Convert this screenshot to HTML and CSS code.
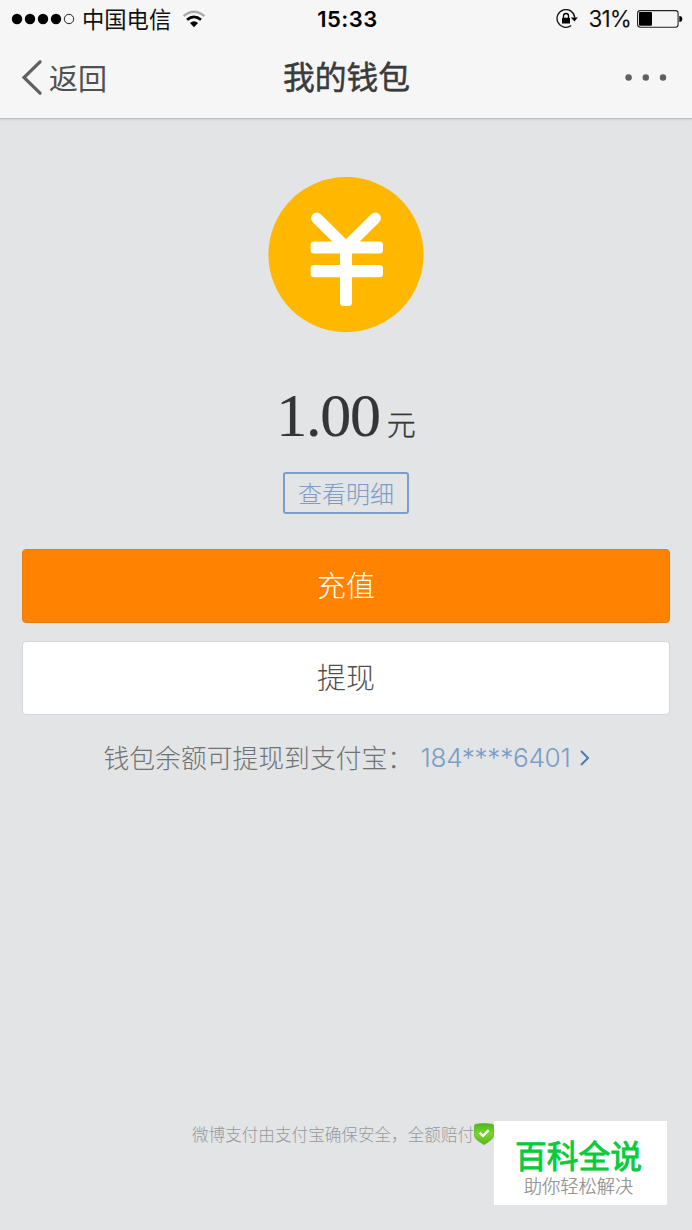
FILE: index.html
```html
<!DOCTYPE html>
<html lang="zh-CN">
<head>
<meta charset="utf-8">
<title>我的钱包</title>
<link rel="stylesheet" href="styles.css">
</head>
<body>
<div class="screen">
  <header class="top">
    <div class="status">
      <div class="status-left">
        <svg class="signal" width="64" height="12" viewBox="0 0 64 12">
          <circle cx="6" cy="6" r="5.2"/><circle cx="19" cy="6" r="5.2"/><circle cx="32" cy="6" r="5.2"/><circle cx="45" cy="6" r="5.2"/>
          <circle cx="58" cy="6" r="4.7" fill="none" stroke="#222" stroke-width="1"/>
        </svg>
        <span class="carrier">中国电信</span>
        <svg class="wifi" width="24" height="18" viewBox="0 0 24 18" fill="none">
          <path d="M1.6 6.2Q12 -2.8 22.4 6.2" stroke="#aaa" stroke-width="2.4"/>
          <path d="M5 9.8Q12 3.8 19 9.8" stroke="#000" stroke-width="2.7"/>
          <path d="M8 13.1Q12 9.4 16 13.1L12 17.2Z" fill="#000"/>
        </svg>
      </div>
      <span class="time">15:33</span>
      <div class="status-right">
        <svg class="lock" width="22" height="20" viewBox="0 0 22 20" fill="none">
          <path d="M15.2 16.6A8.9 8.9 0 1 1 18.8 8.6" stroke="#111" stroke-width="1.3"/>
          <path d="M14.8 8.5H21.8L18.4 12.4Z" fill="#000"/>
          <rect x="6" y="8.8" width="8" height="5.8" rx=".6" fill="#000"/>
          <path d="M7.5 9V7a2.5 2.5 0 0 1 5 0v2" stroke="#000" stroke-width="1.3"/>
        </svg>
        <span class="percent">31%</span>
        <svg class="battery" width="46" height="18" viewBox="0 0 46 18">
          <rect x=".6" y=".6" width="40.5" height="16.6" rx="2.6" fill="none" stroke="#222" stroke-width="1.1"/>
          <rect x="2" y="2" width="13" height="13.8" rx="1"/>
          <path d="M42.3 6q3 .2 3 3t-3 3z"/>
        </svg>
      </div>
    </div>
    <nav class="nav">
      <div class="back">
        <svg width="22" height="36" viewBox="0 0 22 36" fill="none" stroke="#606060" stroke-width="3.2" stroke-linecap="round" stroke-linejoin="miter"><path d="M19 1.8L3 17.5L19 33.2"/></svg>
        <span>返回</span>
      </div>
      <h1 class="title">我的钱包</h1>
      <svg class="more" width="42" height="8" viewBox="0 0 42 8" fill="#606060"><circle cx="3.6" cy="3.5" r="3.2"/><circle cx="20.8" cy="3.5" r="3.2"/><circle cx="38" cy="3.5" r="3.2"/></svg>
    </nav>
  </header>
  <main class="wallet">
    <svg class="coin" width="156" height="156" viewBox="0 0 156 156" fill="none">
      <circle cx="78" cy="77.6" r="77.6" fill="#ffb700"/>
      <g stroke="#fff" stroke-width="11.4" stroke-linecap="round"><path d="M48.8 41.2L78 70L107.2 41.2"/></g>
      <g fill="#fff"><rect x="42.6" y="64.6" width="72.4" height="12" rx="3.5"/><rect x="42.6" y="88" width="72.4" height="12.2" rx="3.5"/><rect x="72" y="65" width="12" height="64" rx="3.5"/></g>
    </svg>
    <div class="balance"><span class="amount">1.00</span><span class="unit">元</span></div>
    <a class="detail">查看明细</a>
    <div class="actions">
      <button class="btn primary">充值</button>
      <button class="btn plain">提现</button>
    </div>
    <div class="account">
      <span class="account-label">钱包余额可提现到支付宝：</span>
      <span class="account-number">184****6401</span>
      <svg class="chevron" width="12" height="18" viewBox="0 0 12 18" fill="none" stroke="#5278b0" stroke-width="2"><path d="M2 3L9 10L2 17"/></svg>
    </div>
  </main>
  <footer class="footer">
    <span>微博支付由支付宝确保安全，全额赔付</span>
    <svg class="shield" width="20" height="22" viewBox="0 0 20 22">
      <defs><linearGradient id="green" x2="0" y2="1"><stop stop-color="#50b51d"/><stop offset=".5" stop-color="#7bd42d"/><stop offset="1" stop-color="#56b91d"/></linearGradient></defs>
      <path d="M2 1.2Q10 -.2 18 1.2Q19.5 1.5 19.5 3V12.5Q19.3 15 16.8 17L11.2 21Q10 21.7 8.8 21L3.2 17Q.7 15 .5 12.5V3Q.5 1.5 2 1.2Z" fill="url(#green)" stroke="#4fb41f" stroke-width=".7"/>
      <path d="M5.6 9.6L9 12.8L14.6 7.2" fill="none" stroke="#fff" stroke-width="2.4"/>
    </svg>
  </footer>
  <aside class="stamp">
    <strong>百科全说</strong>
    <span>助你轻松解决</span>
  </aside>
</div>
</body>
</html>
```
FILE: styles.css
```css
* { box-sizing: border-box; }
body { margin: 0; font-family: Inter, "Noto Sans CJK SC", sans-serif; }
svg { display: block; flex: none; }
.screen {
  position: relative;
  display: flex;
  flex-direction: column;
  width: 692px;
  height: 1230px;
  overflow: hidden;
  background: #e2e4e6;
}
.top {
  height: 119px;
  background: #f6f6f6;
  border-bottom: 1px solid #bbbdbe;
  box-shadow: 0 1px 2px #cfd1d2;
}
.status, .nav {
  display: grid;
  grid-template-columns: 1fr auto 1fr;
  align-items: center;
}
.status { height: 38px; padding: 0 9px 0 11px; color: #111; }
.status-left, .status-right { display: flex; align-items: center; }
.status-right { justify-content: flex-end; }
.carrier { margin: 0 0 0 7px; padding-bottom: 2px; font-family: "Noto Sans CJK SC", sans-serif; font-size: 22.3px; line-height: 34px; }
.wifi { margin-left: 11px; }
.time { padding-left: 1px; font-size: 22px; line-height: 38px; font-weight: 600; letter-spacing: .5px; color: #000; }
.percent { margin: 0 6px 0 11px; font-size: 22.5px; line-height: 38px; letter-spacing: -.9px; }
.nav { height: 80px; padding: 0 25px 0 21px; }
.back { display: flex; align-items: center; gap: 6px; color: #505050; font: 29px/44px "Noto Sans CJK SC", sans-serif; }
.back span { padding-bottom: 2px; }
.title { margin: 0; padding: 0 0 6px 5px; color: #3b3b3b; font: 400 31.8px/46px "Noto Sans CJK SC", sans-serif; -webkit-text-stroke: .5px #3b3b3b; }
.more { justify-self: end; }
.wallet { display: flex; flex-direction: column; align-items: center; padding: 58px 22px 0; }
.balance { display: flex; align-items: baseline; gap: 7px; height: 86px; margin-top: 39px; color: #333538; }
.amount { font: 62px/86px "Liberation Serif", serif; letter-spacing: -1.2px; -webkit-text-stroke: .2px #333538; }
.unit { font: 300 29px/40px "Noto Sans CJK SC", sans-serif; -webkit-text-stroke: .3px #333538; }
.detail {
  width: 126px;
  height: 42px;
  margin-top: 14px;
  border: 2px solid #7b9dc6;
  border-radius: 3px;
  color: #7b9dc6;
  font: 300 24px/38px "Noto Sans CJK SC", sans-serif;
  text-align: center;
}
.actions { display: flex; flex-direction: column; gap: 18px; align-self: stretch; margin-top: 35px; }
.btn { height: 74px; padding: 0 0 4px; border-radius: 4px; font: 300 29px/68px "Noto Sans CJK SC", sans-serif; text-align: center; }
.primary { border: 1px solid #e87e12; background: #ff8200; color: #fff; }
.plain { border: 1px solid #d5d7d8; background: #fff; color: #505050; }
.account { display: flex; align-items: center; height: 40px; margin-top: 22px; padding-left: 2px; font-weight: 300; }
.account-label { width: 317px; color: #707274; font: 300 25.8px/40px "Noto Sans CJK SC", sans-serif; white-space: nowrap; }
.account-number { width: 151px; padding-top: 1px; color: #7b9dc6; font-size: 26.2px; font-weight: 300; letter-spacing: -.3px; white-space: nowrap; }
.chevron { margin-left: 7px; }
.footer { display: flex; align-items: center; height: 28px; margin: auto 0 82px 192px; color: #98999b; font: 300 16.6px/28px "Noto Sans CJK SC", sans-serif; white-space: nowrap; }
.stamp {
  position: absolute;
  left: 494px;
  top: 1121px;
  display: flex;
  flex-direction: column;
  align-items: center;
  width: 173px;
  height: 84px;
  padding: 12px 4px 0 0;
  background: #fff;
  font-family: "Noto Sans CJK SC", sans-serif;
}
.stamp strong { color: #08cb3c; font-size: 31.8px; font-weight: 400; line-height: 42px; -webkit-text-stroke: .9px #08cb3c; }
.stamp span { color: #8c8c8c; font-size: 18.3px; font-weight: 300; line-height: 20px; -webkit-text-stroke: .2px #8c8c8c; }
```
